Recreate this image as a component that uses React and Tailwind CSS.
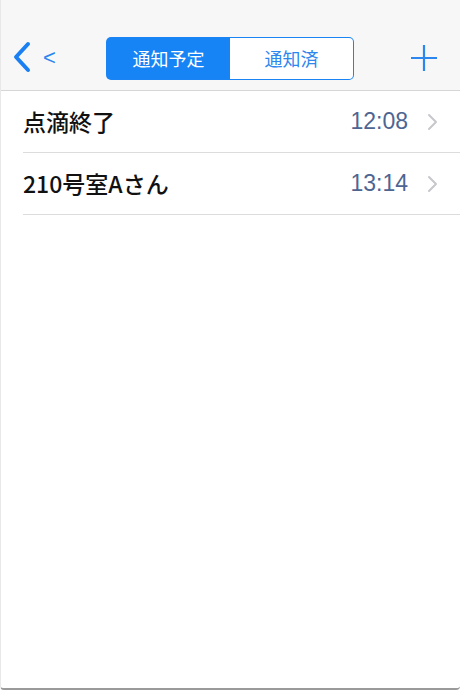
import React from "react";

const jp = { fontFamily: '"Noto Sans CJK JP", "Noto Sans", sans-serif' };
const num = { fontFamily: '"Liberation Sans", Arial, sans-serif' };

function Chevron() {
  return (
    <svg width="12" height="18" viewBox="0 0 12 18" className="ml-[19px]">
      <path d="M2 2 L9 9 L2 16" fill="none" stroke="#c7c7cc" strokeWidth="2" strokeLinecap="round" strokeLinejoin="round" />
    </svg>
  );
}

function Row({ title, time }) {
  return (
    <div className="flex items-center h-[62px] border-b border-[#dcdcdc] pr-[21px]">
      <div className="flex-1 text-[23px] text-[#111] font-medium leading-none" style={jp}>{title}</div>
      <div className="text-[23px] text-[#4e6592] leading-none" style={num}>{time}</div>
      <Chevron />
    </div>
  );
}

export default function App() {
  return (
    <div className="w-[460px] h-[690px] bg-white border-l border-l-[#e8e8e8] border-b-2 border-b-[#9a9a9a] rounded-b-[4px] flex flex-col overflow-hidden">
      <div className="h-[91px] bg-[#f7f7f7] border-b border-[#d6d6d6] flex items-center pt-[34px] pb-[8px]">
        <div className="flex items-center w-[105px] pl-[10px]">
          <svg width="22" height="34" viewBox="0 0 22 34">
            <path d="M17 3 L5 16 L17 29" fill="none" stroke="#1a7ff2" strokeWidth="4" strokeLinecap="round" strokeLinejoin="round" />
          </svg>
          <span className="ml-[10px] text-[22px] text-[#2b86ef] leading-none font-light" style={num}>&lt;</span>
        </div>
        <div className="w-[248px] h-[43px] rounded-[5px] bg-[#1a84f5] p-px" style={jp}>
          <div className="flex h-full rounded-[4px] overflow-hidden">
            <div className="w-1/2 bg-[#1784f6] text-white text-[18px] flex items-center justify-center">通知予定</div>
            <div className="w-1/2 bg-white text-[#2d87ee] text-[18px] flex items-center justify-center">通知済</div>
          </div>
        </div>
        <div className="flex-1 flex justify-end pr-[22px]">
          <svg width="28" height="28" viewBox="0 0 28 28">
            <path d="M14 1 V27 M1 14 H27" stroke="#2b86ef" strokeWidth="2.2" />
          </svg>
        </div>
      </div>
      <div className="pl-[22px]">
        <Row title="点滴終了" time="12:08" />
        <Row title="210号室Aさん" time="13:14" />
      </div>
    </div>
  );
}
